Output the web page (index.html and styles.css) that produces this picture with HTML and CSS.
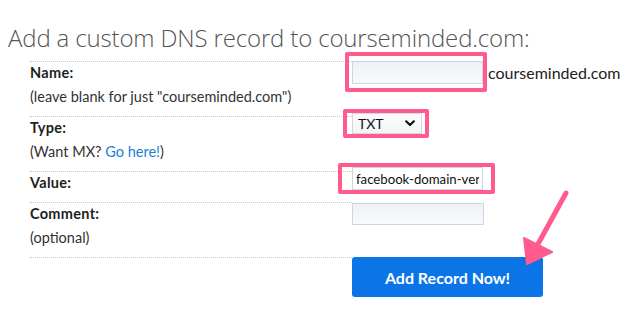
FILE: index.html
```html
<!DOCTYPE html>
<html>
<head>
<meta charset="utf-8">
<link rel="stylesheet" href="styles.css">
</head>
<body>
<div class="page">
  <h1 class="title">Add a custom DNS record to courseminded.com:</h1>
  <div class="form">
    <div class="label-cell">
      <div class="label">Name:</div>
      <div class="hint">(leave blank for just "courseminded.com")</div>
    </div>
    <div class="field-cell">
      <input class="text-input" type="text"><span class="suffix">courseminded.com</span>
    </div>

    <div class="label-cell">
      <div class="label">Type:</div>
      <div class="hint">(Want MX? <a class="link" href="#">Go here!</a>)</div>
    </div>
    <div class="field-cell">
      <div class="select"><span>TXT</span>
        <svg class="chev" width="10" height="7" viewBox="0 0 10 7"><path d="M1.2 1.3 L5 5 L8.8 1.3" fill="none" stroke="#111" stroke-width="2.2" stroke-linecap="round" stroke-linejoin="round"/></svg>
      </div>
    </div>

    <div class="label-cell short">
      <div class="label">Value:</div>
    </div>
    <div class="field-cell">
      <input class="text-input value-input" type="text" value="facebook-domain-verification=abc123">
    </div>

    <div class="label-cell">
      <div class="label">Comment:</div>
      <div class="hint">(optional)</div>
    </div>
    <div class="field-cell">
      <input class="text-input comment-input" type="text">
    </div>

    <div class="label-cell last"></div>
    <div class="field-cell">
      <button class="submit" type="button">Add Record Now!</button>
    </div>
  </div>

  <div class="mark mark-name"></div>
  <div class="mark mark-type"></div>
  <div class="mark mark-value"></div>
  <svg class="arrow" width="638" height="315" viewBox="0 0 638 315">
    <line x1="566" y1="193" x2="538" y2="244" stroke="#ff5c8d" stroke-width="5" stroke-linecap="round"/>
    <polygon points="527,264 524,238 552,252" fill="#ff5c8d" stroke="#ff5c8d" stroke-width="2" stroke-linejoin="round"/>
  </svg>
</div>
</body>
</html>
```

FILE: styles.css
```css
html, body {
  margin: 0;
  padding: 0;
  background: #fff;
}

.page {
  position: relative;
  width: 638px;
  height: 315px;
  overflow: hidden;
  font-family: Lato, "Liberation Sans", sans-serif;
}

.title {
  margin: 0;
  padding: 22px 0 0 8px;
  height: 39px;
  font-family: "Open Sans", sans-serif;
  font-weight: 300;
  font-size: 24px;
  line-height: 32px;
  color: #555;
  letter-spacing: -0.15px;
}

.form {
  display: grid;
  grid-template-columns: 322px auto;
  margin-left: 30px;
}

.label-cell {
  border-top: 1px dotted #c8c8c8;
  padding: 2px 0 10px 0;
}

.label-cell.short {
  padding-bottom: 0;
  height: 28px;
}

.label-cell.last {
  height: 40px;
  padding: 0;
}

.label {
  font-weight: 700;
  font-size: 14.5px;
  line-height: 18px;
  color: #1e1e1e;
  letter-spacing: 0.3px;
}

.hint {
  margin-top: 6px;
  font-size: 14.5px;
  line-height: 18px;
  color: #333;
}

.link {
  color: #1b7fd6;
  text-decoration: none;
}

.field-cell {
  display: flex;
  align-items: flex-start;
}

.text-input {
  box-sizing: border-box;
  width: 131px;
  height: 23px;
  margin: 0;
  padding: 0 3px;
  border: 1px solid #cfd6dd;
  border-radius: 0;
  background: linear-gradient(#edf2f7, #f8fafc);
  font-family: Lato, "Liberation Sans", sans-serif;
  font-size: 13.2px;
  color: #111;
  outline: none;
}

.suffix {
  margin-left: 5px;
  font-size: 16px;
  line-height: 24px;
  color: #222;
}

.select {
  box-sizing: border-box;
  width: 70px;
  height: 21px;
  margin-top: -3px;
  padding: 0 6px 0 5px;
  border: 1px solid #d5d9dd;
  background: linear-gradient(#fdfdfd, #f1f3f5);
  display: flex;
  align-items: center;
  justify-content: space-between;
  font-size: 14px;
  color: #111;
}

.value-input {
  margin-top: -4px;
  background: #fff;
}

.comment-input {
  width: 132px;
  height: 22px;
  margin-top: 1px;
}

.submit {
  width: 191px;
  height: 40px;
  margin: 0;
  border: none;
  border-radius: 3px;
  background: #0b74e6;
  color: #fff;
  font-family: Lato, "Liberation Sans", sans-serif;
  font-weight: 700;
  font-size: 16px;
}

.mark {
  position: absolute;
  box-sizing: border-box;
  border: 4px solid #ff5c8d;
  border-radius: 2px;
}

.mark-name {
  left: 345px;
  top: 52px;
  width: 142px;
  height: 40px;
}

.mark-type {
  left: 343px;
  top: 109px;
  width: 86px;
  height: 29px;
}

.mark-value {
  left: 338px;
  top: 163px;
  width: 157px;
  height: 31px;
}

.arrow {
  position: absolute;
  left: 0;
  top: 0;
  pointer-events: none;
}
```
